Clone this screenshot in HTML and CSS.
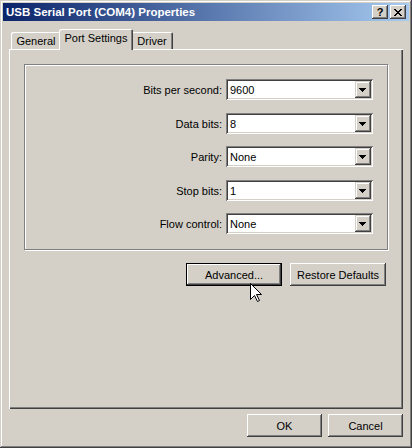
FILE: index.html
```html
<!DOCTYPE html>
<html>
<head>
<meta charset="utf-8">
<link rel="stylesheet" href="styles.css">
</head>
<body>
<div class="window">
  <div class="titlebar">
    <span class="title">USB Serial Port (COM4) Properties</span>
    <div class="caption-btns">
      <div class="cbtn help">?</div>
      <div class="cbtn close">
        <svg width="8" height="7" viewBox="0 0 8 7"><path d="M0 0h2v1h-2zM6 0h2v1h-2zM1 1h2v1h-2zM5 1h2v1h-2zM2 2h4v1h-4zM3 3h2v1h-2zM2 4h4v1h-4zM1 5h2v1h-2zM5 5h2v1h-2zM0 6h2v1h-2zM6 6h2v1h-2z" fill="#000"/></svg>
      </div>
    </div>
  </div>
  <div class="body">
    <div class="tabs">
      <div class="tab tab-general">General</div>
      <div class="tab tab-port active">Port Settings</div>
      <div class="tab tab-driver">Driver</div>
    </div>
    <div class="panel">
      <div class="group">
        <div class="row">
          <span class="label">Bits per second:</span>
          <div class="combo"><span class="value">9600</span><span class="dd"><svg width="7" height="4" viewBox="0 0 7 4"><path d="M0 0h7v1h-1v1h-1v1h-1v1h-1v-1h-1v-1h-1v-1h-1z" fill="#000"/></svg></span></div>
        </div>
        <div class="row">
          <span class="label">Data bits:</span>
          <div class="combo"><span class="value">8</span><span class="dd"><svg width="7" height="4" viewBox="0 0 7 4"><path d="M0 0h7v1h-1v1h-1v1h-1v1h-1v-1h-1v-1h-1v-1h-1z" fill="#000"/></svg></span></div>
        </div>
        <div class="row">
          <span class="label">Parity:</span>
          <div class="combo"><span class="value">None</span><span class="dd"><svg width="7" height="4" viewBox="0 0 7 4"><path d="M0 0h7v1h-1v1h-1v1h-1v1h-1v-1h-1v-1h-1v-1h-1z" fill="#000"/></svg></span></div>
        </div>
        <div class="row">
          <span class="label">Stop bits:</span>
          <div class="combo"><span class="value">1</span><span class="dd"><svg width="7" height="4" viewBox="0 0 7 4"><path d="M0 0h7v1h-1v1h-1v1h-1v1h-1v-1h-1v-1h-1v-1h-1z" fill="#000"/></svg></span></div>
        </div>
        <div class="row">
          <span class="label">Flow control:</span>
          <div class="combo"><span class="value">None</span><span class="dd"><svg width="7" height="4" viewBox="0 0 7 4"><path d="M0 0h7v1h-1v1h-1v1h-1v1h-1v-1h-1v-1h-1v-1h-1z" fill="#000"/></svg></span></div>
        </div>
      </div>
      <div class="actions">
        <div class="btn default wide">Advanced...</div>
        <div class="btn wide">Restore Defaults</div>
      </div>
    </div>
    <div class="footer">
      <div class="btn">OK</div>
      <div class="btn">Cancel</div>
    </div>
  </div>
  <svg class="cursor" width="13" height="20" viewBox="0 0 13 20"><polygon points="0.5,0.5 0.5,16.5 4.5,12.5 7.5,18.5 9.5,17.5 6.5,11.5 11.5,11.5" fill="#fff" stroke="#000" stroke-width="1"/></svg>
</div>
</body>
</html>
```
FILE: styles.css
```css
* { box-sizing: border-box; }
body {
  margin: 0;
  background: #D4D0C8;
  font-family: "Liberation Sans", Arial, sans-serif;
  font-size: 11px;
  color: #000;
}
.window {
  position: relative;
  width: 412px;
  height: 448px;
  padding: 3px;
  background: #D4D0C8;
  box-shadow: inset -1px -1px 0 #404040, inset 1px 1px 0 #D4D0C8, inset -2px -2px 0 #808080, inset 2px 2px 0 #fff;
}
.titlebar {
  height: 18px;
  display: flex;
  align-items: center;
  padding: 0 3px 0 3px;
  background: linear-gradient(to right, #0A246A, #A6CAF0);
  color: #fff;
  font-weight: bold;
  font-size: 11.5px;
}
.title { white-space: nowrap; }
.caption-btns {
  margin-left: auto;
  display: flex;
  gap: 2px;
}
.cbtn {
  width: 16px;
  height: 14px;
  background: #D4D0C8;
  box-shadow: inset -1px -1px 0 #404040, inset 1px 1px 0 #fff, inset -2px -2px 0 #808080;
  display: flex;
  align-items: center;
  justify-content: center;
  color: #000;
  font-weight: bold;
  font-size: 11px;
  line-height: 14px;
}
.body { padding: 8px 6px 0 6px; }
.tabs {
  display: flex;
  align-items: flex-end;
  height: 20px;
  padding-left: 2px;
}
.tab {
  height: 17px;
  display: flex;
  align-items: center;
  justify-content: center;
  background: #D4D0C8;
  border-radius: 2px 2px 0 0;
  box-shadow: inset 1px 1px 0 #fff, inset -1px 0 0 #404040, inset -2px 0 0 #808080;
  padding-top: 1px;
}
.tab-general { width: 50px; }
.tab-driver { width: 42px; }
.tab.active {
  position: relative;
  z-index: 2;
  width: 74px;
  height: 21px;
  margin: 0 -2px -1px -2px;
  padding-top: 0;
  padding-bottom: 3px;
}
.panel {
  height: 360px;
  padding: 15px 0 0 15px;
  box-shadow: inset 1px 1px 0 #fff, inset -1px -1px 0 #404040, inset -2px -2px 0 #808080;
}
.group {
  width: 364px;
  height: 186px;
  border: 1px solid #808080;
  box-shadow: inset 1px 1px 0 #fff, 1px 1px 0 #fff;
  padding-top: 14px;
  display: flex;
  flex-direction: column;
}
.row {
  display: grid;
  grid-template-columns: 197px 147px;
  column-gap: 4px;
  align-items: center;
  height: 21px;
}
.row:nth-child(2) { margin-top: 13px; }
.row:nth-child(3) { margin-top: 12px; }
.row:nth-child(4) { margin-top: 13px; }
.row:nth-child(5) { margin-top: 12px; }
.label {
  text-align: right;
  white-space: nowrap;
}
.combo {
  height: 21px;
  background: #fff;
  box-shadow: inset 1px 1px 0 #808080, inset -1px -1px 0 #fff, inset 2px 2px 0 #404040, inset -2px -2px 0 #D4D0C8;
  display: flex;
  align-items: center;
  padding: 2px;
}
.value { padding-left: 2px; }
.dd {
  margin-left: auto;
  width: 16px;
  height: 17px;
  background: #D4D0C8;
  box-shadow: inset -1px -1px 0 #404040, inset 1px 1px 0 #D4D0C8, inset -2px -2px 0 #808080, inset 2px 2px 0 #fff;
  display: flex;
  align-items: center;
  justify-content: center;
}
.dd svg { display: block; margin-left: -1px; }
.actions {
  display: flex;
  gap: 8px;
  margin-top: 13px;
  padding-left: 162px;
}
.btn {
  width: 75px;
  height: 23px;
  background: #D4D0C8;
  box-shadow: inset -1px -1px 0 #404040, inset 1px 1px 0 #fff, inset -2px -2px 0 #808080;
  display: flex;
  align-items: center;
  justify-content: center;
  white-space: nowrap;
}
.btn.wide { width: 96px; }
.btn.default {
  border: 1px solid #000;
}
.footer {
  display: flex;
  justify-content: flex-end;
  gap: 6px;
  margin-top: 5px;
}
.cursor {
  position: absolute;
  left: 250px;
  top: 283px;
}
```
